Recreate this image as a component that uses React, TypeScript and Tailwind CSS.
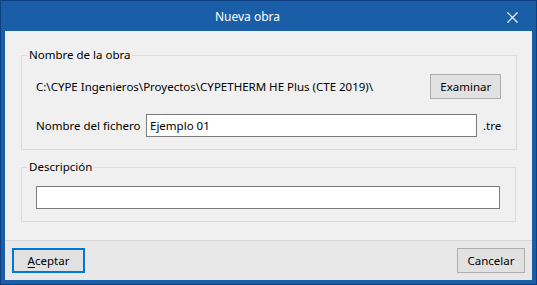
const font = { fontFamily: '"Noto Sans", "Open Sans", sans-serif' };

export default function App() {
  return (
    <div
      className="w-[537px] h-[285px] flex flex-col bg-[#1b5ea8] border border-[#0e3f82] text-[11.5px] text-black"
      style={font}
    >
      {/* title bar */}
      <div className="h-[30px] flex items-center shrink-0">
        <div className="flex-1 text-center text-white text-[12px] pl-[4px] pt-[2px]">Nueva obra</div>
        <div className="w-[46px] h-full flex items-center justify-center pr-[2px] pt-[2px]">
          <svg width="11" height="11" viewBox="0 0 11 11">
            <path d="M0.5 0.5 L10.5 10.5 M10.5 0.5 L0.5 10.5" stroke="white" strokeWidth="1.2" />
          </svg>
        </div>
      </div>

      {/* body */}
      <div className="flex-1 mx-[4px] mb-[4px] flex flex-col bg-[#f0f0f0]">
        <div className="px-[16px] pt-[16px]">
          <fieldset className="border border-[#dcdcdc] pl-[14px] pr-[15px] pt-[11px] pb-[12px]">
            <legend className="-ml-[9px] px-[2px] leading-[16px]">Nombre de la obra</legend>
            <div className="flex items-center justify-between h-[25px]">
              <span>C:\CYPE Ingenieros\Proyectos\CYPETHERM HE Plus (CTE 2019)\</span>
              <button className="w-[71px] h-[25px] bg-[#e1e1e1] border border-[#adadad]">Examinar</button>
            </div>
            <div className="flex items-center mt-[15px]">
              <span className="w-[110px] shrink-0">Nombre del fichero</span>
              <div className="w-[331px] h-[23px] bg-white border border-[#7a7a7a] flex items-center px-[3px]">
                Ejemplo 01
              </div>
              <span className="ml-[6px]">.tre</span>
            </div>
          </fieldset>

          <fieldset className="mt-[9px] border border-[#dcdcdc] pl-[14px] pr-[15px] pt-[11px] pb-[12px]">
            <legend className="-ml-[9px] px-[2px] leading-[16px]">Descripción</legend>
            <div className="h-[23px] bg-white border border-[#7a7a7a]" />
          </fieldset>
        </div>

        <div className="mt-auto h-[40px] border-t border-[#d6d6d6] bg-[#e8e8e8] flex items-center justify-between px-[7px]">
          <button className="w-[73px] h-[25px] bg-[#e1e1e1] border-2 border-[#0078d7]">
            <span className="underline underline-offset-2">A</span>ceptar
          </button>
          <button className="w-[68px] h-[25px] bg-[#e1e1e1] border border-[#adadad]">Cancelar</button>
        </div>
      </div>
    </div>
  );
}
